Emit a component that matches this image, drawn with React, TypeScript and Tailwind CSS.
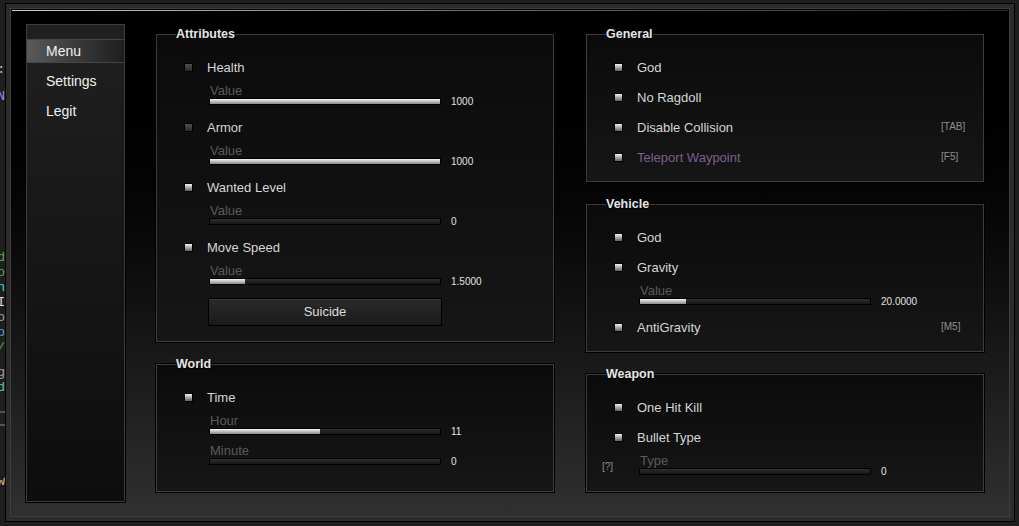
import React from 'react';

type Item =
  | { kind: 'check'; label: string; dark?: boolean; bind?: string; purple?: boolean }
  | { kind: 'slider'; label: string; value: string; pct: number; hint?: string }
  | { kind: 'button'; label: string };

const Check = ({ label, dark, bind, purple }: { label: string; dark?: boolean; bind?: string; purple?: boolean }) => (
  <div className="flex items-center h-[30px] pl-[27px]">
    <span
      className={`w-[9px] h-[9px] shrink-0 border border-black bg-gradient-to-b ${
        dark ? 'from-[#505050] to-[#2a2a2a]' : 'from-[#f4f4f4] to-[#626262]'
      }`}
    />
    <span className={`ml-[14px] text-[13px] leading-none ${purple ? 'text-[#7b5f8c]' : 'text-[#d6d6d6]'}`}>{label}</span>
    {bind && <span className="ml-auto w-[42px] text-[10px] leading-none text-[#8e8e8e]">{bind}</span>}
  </div>
);

const Slider = ({ label, value, pct, hint }: { label: string; value: string; pct: number; hint?: string }) => (
  <div className="flex h-[30px]">
    <div className="w-[52px] shrink-0 pt-[9px] pl-[15px] text-[10px] leading-[11px] text-[#8e8e8e]">{hint}</div>
    <div className="flex flex-col">
      <span className="h-[16px] leading-[17px] pl-px text-[13px] text-[#5a5a5a]">{label}</span>
      <div className="flex items-center h-[7px]">
        <div className="w-[232px] h-[7px] border border-black bg-gradient-to-b from-[#2e2e2e] to-[#171717]">
          <div className="h-full bg-gradient-to-b from-[#f6f6f6] to-[#8a8a8a]" style={{ width: `${pct}%` }} />
        </div>
        <span className="ml-[10px] text-[10px] leading-none text-[#e2e2e2]">{value}</span>
      </div>
    </div>
  </div>
);

const Group = ({ title, items, pb, className = '' }: { title: string; items: Item[]; pb: string; className?: string }) => (
  <fieldset
    className={`w-[398px] border border-[#3c3c3c] shadow-[0_0_0_1px_#000] bg-gradient-to-b from-[#0b0b0b] to-[#161616] pt-[11px] ${pb} ${className}`}
  >
    <legend className="ml-[19px] text-[12.5px] font-bold leading-[14px] text-[#e6e6e6] [text-shadow:1px_1px_0_#000]">
      {title}
    </legend>
    {items.map((it, i) =>
      it.kind === 'check' ? (
        <Check key={i} label={it.label} dark={it.dark} bind={it.bind} purple={it.purple} />
      ) : it.kind === 'slider' ? (
        <Slider key={i} label={it.label} value={it.value} pct={it.pct} hint={it.hint} />
      ) : (
        <div key={i} className="pl-[51px] mt-[6px]">
          <button className="w-[234px] h-[28px] border border-black bg-gradient-to-b from-[#2b2b2b] to-[#1a1a1a] shadow-[inset_0_1px_0_#383838] text-[13px] text-[#dedede]">
            {it.label}
          </button>
        </div>
      )
    )}
  </fieldset>
);

const attributes: Item[] = [
  { kind: 'check', label: 'Health', dark: true },
  { kind: 'slider', label: 'Value', value: '1000', pct: 100 },
  { kind: 'check', label: 'Armor', dark: true },
  { kind: 'slider', label: 'Value', value: '1000', pct: 100 },
  { kind: 'check', label: 'Wanted Level' },
  { kind: 'slider', label: 'Value', value: '0', pct: 0 },
  { kind: 'check', label: 'Move Speed' },
  { kind: 'slider', label: 'Value', value: '1.5000', pct: 15 },
  { kind: 'button', label: 'Suicide' },
];

const world: Item[] = [
  { kind: 'check', label: 'Time' },
  { kind: 'slider', label: 'Hour', value: '11', pct: 48 },
  { kind: 'slider', label: 'Minute', value: '0', pct: 0 },
];

const general: Item[] = [
  { kind: 'check', label: 'God' },
  { kind: 'check', label: 'No Ragdoll' },
  { kind: 'check', label: 'Disable Collision', bind: '[TAB]' },
  { kind: 'check', label: 'Teleport Waypoint', bind: '[F5]', purple: true },
];

const vehicle: Item[] = [
  { kind: 'check', label: 'God' },
  { kind: 'check', label: 'Gravity' },
  { kind: 'slider', label: 'Value', value: '20.0000', pct: 20 },
  { kind: 'check', label: 'AntiGravity', bind: '[M5]' },
];

const weapon: Item[] = [
  { kind: 'check', label: 'One Hit Kill' },
  { kind: 'check', label: 'Bullet Type' },
  { kind: 'slider', label: 'Type', value: '0', pct: 0, hint: '[?]' },
];

const menu = ['Menu', 'Settings', 'Legit'];

export default function App() {
  return (
    <div className="w-[1019px] h-[526px] bg-[#1e1e1e] flex overflow-hidden font-['Liberation_Sans',Arial,sans-serif]">
      {/* editor text peeking out behind the window */}
      <div className="w-[5px] shrink-0 overflow-hidden flex flex-col items-end font-['Liberation_Mono',monospace] text-[13px] leading-[15px]">
        <div className="mt-[62px] text-[#c8c8c8]">:</div>
        <div className="mt-[12px] text-[#9d8cff]">N</div>
        <div className="mt-[146px] text-[#57a64a]">d</div>
        <div className="text-[#57a64a]">o</div>
        <div className="text-[#4ec9d0]">n</div>
        <div className="text-[#dcdcdc]">I</div>
        <div className="text-[#a0a0a0]">o</div>
        <div className="text-[#569cd6]">p</div>
        <div className="text-[#57a64a]">/</div>
        <div className="mt-[10px] text-[#a0a0a0]">g</div>
        <div className="text-[#4ec9b0]">d</div>
        <div className="mt-[16px] w-[5px] h-[2px] bg-[#555]" />
        <div className="mt-[11px] w-[5px] h-[2px] bg-[#555]" />
        <div className="mt-[48px] text-[#d7ba7d]">w</div>
      </div>

      <div className="mt-[3px] w-[1010px] h-[519px] shrink-0 border border-black bg-[#2c2c2c] p-[4px]">
        <div className="h-full border border-[#3e3e3e] bg-gradient-to-b from-black to-[#303030] flex flex-col">
          <div className="mt-px mx-px h-px bg-gradient-to-r from-[#cfcfcf] via-[#6a6a6a] to-[#2a2a2a]" />
          <div className="flex pt-[13px] pl-[15px]">
            {/* sidebar */}
            <div className="w-[99px] h-[478px] shrink-0 border border-[#3c3c3c] shadow-[0_0_0_1px_#000] bg-gradient-to-b from-[#202020] to-[#0d0d0d] pt-[14px] flex flex-col gap-[6px]">
              {menu.map((m, i) => (
                <div
                  key={m}
                  className={`h-[24px] flex items-center pl-[19px] text-[14px] text-[#f0f0f0] ${
                    i === 0 ? 'bg-gradient-to-r from-[#5a5a5a] to-[#1e1e1e] border-y border-[#464646]' : ''
                  }`}
                >
                  {m}
                </div>
              ))}
            </div>

            <div className="ml-[31px] mt-[3px] flex flex-col w-[398px]">
              <Group title="Attributes" items={attributes} pb="pb-[15px]" />
              <Group title="World" items={world} pb="pb-[19px]" className="mt-[15px]" />
            </div>

            <div className="ml-[32px] mt-[3px] flex flex-col w-[398px]">
              <Group title="General" items={general} pb="pb-[9px]" />
              <Group title="Vehicle" items={vehicle} pb="pb-[9px]" className="mt-[15px]" />
              <Group title="Weapon" items={weapon} pb="pb-[9px]" className="mt-[15px]" />
            </div>
          </div>
        </div>
      </div>
    </div>
  );
}
